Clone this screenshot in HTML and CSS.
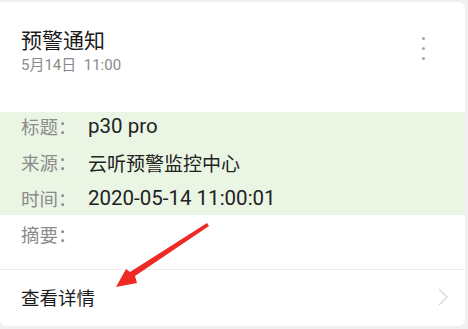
FILE: index.html
```html
<!DOCTYPE html>
<html lang="zh">
<head>
<meta charset="utf-8">
<link rel="stylesheet" href="styles.css">
</head>
<body>
<div class="card">
  <div class="header">
    <div class="titles">
      <div class="title">预警通知</div>
      <div class="date">5月14日&nbsp;&nbsp;11:00</div>
    </div>
    <div class="more"><span></span><span></span><span></span></div>
  </div>
  <div class="info">
    <div class="hl"></div>
    <div class="row"><span class="label">标题：</span><span class="value latin">p30 pro</span></div>
    <div class="row"><span class="label">来源：</span><span class="value">云听预警监控中心</span></div>
    <div class="row"><span class="label">时间：</span><span class="value latin">2020-05-14 11:00:01</span></div>
    <div class="row"><span class="label">摘要：</span><span class="value"></span></div>
  </div>
  <div class="footer">
    <span class="link">查看详情</span>
    <svg class="chev" width="12" height="18" viewBox="0 0 12 18"><path d="M2 1 L10 9 L2 17" fill="none" stroke="#d6d6d6" stroke-width="1.4"/></svg>
  </div>
  <svg class="arrow" width="468" height="329" viewBox="0 0 468 329">
    <polygon points="207,223 209,226 135,276 137,283 116,287 126,269 130,272" fill="#ee2a24"/>
  </svg>
</div>
</body>
</html>
```
FILE: styles.css
```css
html, body {
  margin: 0;
  padding: 0;
}
body {
  background: #f0f0f0;
  width: 468px;
  height: 329px;
  overflow: hidden;
  font-family: "Noto Sans CJK SC", sans-serif;
}
.card {
  position: relative;
  margin: 2px 3px 3px 0;
  height: 324px;
  background: #fff;
  border-radius: 0 6px 6px 6px;
  box-sizing: border-box;
  overflow: hidden;
}
.header {
  display: flex;
  justify-content: space-between;
  padding: 22px 40px 0 21px;
  height: 106px;
  box-sizing: border-box;
}
.title {
  font-size: 21px;
  line-height: 30px;
  color: #1b1b1b;
}
.date {
  margin-top: 1px;
  font-family: "Roboto", "Noto Sans CJK SC", sans-serif;
  font-size: 15px;
  line-height: 20px;
  color: #8a8a8a;
}
.more {
  display: flex;
  flex-direction: column;
  gap: 7px;
  padding-top: 13px;
}
.more span {
  width: 3px;
  height: 3px;
  background: #a8a8a8;
  border-radius: 50%;
}
.info {
  position: relative;
  padding: 0 0 17px 21px;
}
.hl {
  position: absolute;
  left: 0;
  right: 0;
  top: 4px;
  height: 103px;
  background: #eaf5e4;
}
.row {
  position: relative;
  display: flex;
  height: 36px;
  align-items: center;
  font-size: 18.5px;
}
.label {
  width: 67px;
  color: #8c8c8c;
}
.value {
  color: #222;
  font-size: 19px;
}
.value.latin {
  font-family: "Roboto", sans-serif;
  font-size: 20.5px;
}
.footer {
  border-top: 1px solid #ececec;
  display: flex;
  align-items: center;
  justify-content: space-between;
  padding: 0 16px 0 21px;
  height: 53px;
}
.link {
  font-size: 18.5px;
  color: #1b1b1b;
}
.arrow {
  position: absolute;
  left: 0;
  top: -2px;
}
```
